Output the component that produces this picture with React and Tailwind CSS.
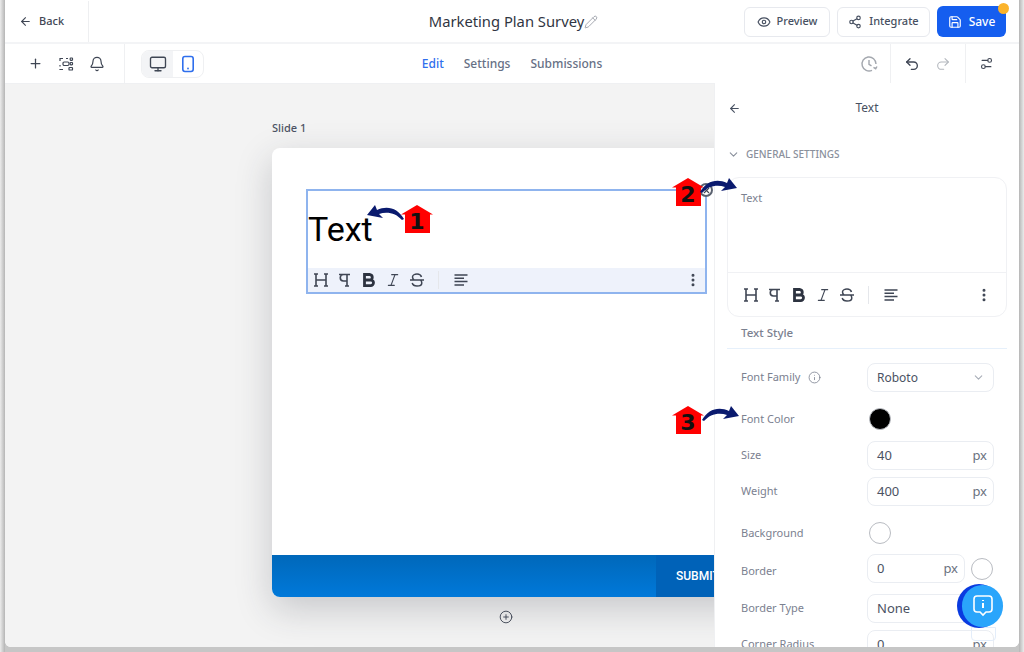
import React from "react";
import { ArrowLeft, Bell, ChevronDown, CirclePlus, EllipsisVertical, Eye, Info, Italic, Monitor, Pencil, Plus, Redo2, Save, Settings2, Share2, Undo2, X } from "lucide-react";

const HeadingIcon = () => (
    <svg width="16" height="16" viewBox="0 0 16 16" fill="none" stroke="currentColor" strokeWidth="1.6">
        <path d="M3 2v12M13 2v12M3 8h10M1 2h4M11 2h4M1 14h4M11 14h4" />
    </svg>
);

const ParagraphIcon = () => (
    <svg width="16" height="16" viewBox="0 0 16 16" fill="none" stroke="currentColor" strokeWidth="1.6">
        <path d="M2 2.5h11M10 2.5V14M8 14h4M10 9H6.5a3.2 3.2 0 0 1 0-6.5" />
    </svg>
);

const BoldIcon = () => (
    <svg width="16" height="16" viewBox="0 0 16 16" fill="none" stroke="currentColor" strokeWidth="2.8" className="text-[#2d3340]">
        <path d="M3.5 2.5h5.5a2.8 2.8 0 0 1 0 5.5H3.5h6.2a2.8 2.8 0 0 1 0 5.6H3.5Z" />
    </svg>
);

const StrikeIcon = () => (
    <svg width="16" height="16" viewBox="0 0 16 16" fill="none" stroke="currentColor" strokeWidth="1.5">
        <path d="M1 8h14M12.5 5c-.5-1.8-2.3-3-4.5-3S3.5 3.3 3.5 5c0 1.2.6 2.2 1.6 3M11.4 8c.9.7 1.4 1.7 1.4 2.9 0 1.8-2 3.1-4.8 3.1-2.500 0-4.300-1.200-4.800-3" />
    </svg>
);

const AlignIcon = () => (
    <svg width="16" height="16" viewBox="0 0 16 16" fill="none" stroke="currentColor" strokeWidth="1.5">
        <path d="M1.500 3h13M1.500 6.300h9.500M1.500 9.600h13M1.500 12.900h9.500" />
    </svg>
);

const ScanIcon = () => (
    <svg width="16" height="16" viewBox="0 0 16 16" fill="none" stroke="currentColor" strokeWidth="1.2">
        <path d="M2 5V2.500h3M8 2.500h2M2 9v1.500M2 13v.5h3" />
        <rect x="5" y="6" width="6" height="3.500" rx="1.200" />
        <rect x="12.200" y="2" width="2.300" height="2.300" rx=".5" />
        <rect x="12.200" y="6.500" width="2.300" height="2.300" rx=".5" />
        <rect x="11" y="11.500" width="3.500" height="2.500" rx=".6" />
    </svg>
);

const PhoneIcon = () => (
    <svg width="18" height="18" viewBox="0 0 18 18" fill="none" stroke="currentColor" strokeWidth="1.6">
        <rect x="3.800" y="1.500" width="10.400" height="15" rx="2.200" />
        <circle cx="9" cy="13.500" r=".9" fill="currentColor" stroke="none" />
    </svg>
);

const HistoryIcon = () => (
    <svg width="18" height="18" viewBox="0 0 18 18" fill="none" stroke="currentColor" strokeWidth="1.4" className="text-[#a3a7ae] mr-[12px]">
        <path d="M16 9A7 7 0 1 0 12 15.300M9 5v4.300l2.500 1.500M17 11.500l-1.300 2.200-2.200-1.300" />
    </svg>
);

const FormatBar = ({ className }) => (
    <div className={`flex items-center text-[#3f4654] ${className}`}>
        <div className="flex items-center gap-2">
            <HeadingIcon />
            <ParagraphIcon />
            <BoldIcon />
            <Italic size={16} strokeWidth={1.7} />
            <StrikeIcon />
        </div>
        <div className="w-px h-[18px] bg-[#e5e7eb] ml-[13px] mr-[14px]"></div>
        <AlignIcon />
        <EllipsisVertical size={16} strokeWidth={2.5} className="ml-auto" />
    </div>
);

const Marker = ({ n, className }) => (
    <div className={`absolute w-[32px] h-[28px] ${className}`}>
        <svg width="32" height="28" viewBox="0 0 32 28" className="absolute inset-0">
            <path d="M16 0L32 9.500H29V28H4V9.500H0Z" fill="#ff0000" />
        </svg>
        <span className="absolute inset-0 flex items-center justify-center pt-[5px] text-[22px] font-bold text-[#111] font-['DejaVu_Sans',sans-serif]">{n}</span>
    </div>
);

const CurveArrow = ({ className, flip }) => (
    <svg width="38" height="18" viewBox="0 0 38 18" className={`absolute ${flip ? "-scale-x-100" : ""} ${className}`} fill="#0a1a6e">
        <path d="M0 14C6 3 17 0 27 5L29 0L37 10L21 13L25 9C17 6 8 8 2 15Z" />
    </svg>
);

const Row = ({ label, children, className, info, labelClass = "" }) => (
    <div className={`flex items-center ${className}`}>
        <div className={`w-[126px] flex items-center gap-[8px] text-[11px] text-[#7b8190] ${labelClass}`}>
            {label}
            {info && <Info size={13} strokeWidth={1.5} />}
        </div>
        {children}
    </div>
);

const Input = ({ value, unit, className }) => (
    <div className={`h-[29px] border border-[#eaedf2] rounded-lg flex items-center justify-between pl-[9px] pr-[6px] text-[13px] text-[#4b5263] ${className}`}>
        <span>{value}</span>
        {unit && <span className="text-[#6b7280]">{unit}</span>}
    </div>
);

const Swatch = ({ className }) => (
    <div className={`w-[22px] h-[22px] rounded-full border border-[#b9bcc2] ${className}`}></div>
);

const App = () => {
    return (
        <div className="relative w-[1024px] h-[652px] overflow-hidden bg-[#c6c6c6] font-['Noto_Sans',sans-serif]">
            <div className="absolute inset-y-0 left-0 w-[5px] bg-gradient-to-r from-[#ececec] to-[#b5b5b5]"></div>
            <div className="absolute inset-y-0 right-0 w-[5px] bg-gradient-to-l from-[#ececec] to-[#b5b5b5]"></div>
            <div className="relative ml-[5px] mr-[5px] h-[647px] bg-white rounded-b-md overflow-hidden flex flex-col">
                <header className="h-[44px] shrink-0 pt-[1px] grid grid-cols-[1fr_auto_1fr] items-center border-b-2 border-[#f3f4f6]">
                    <div className="h-[41px] w-[84px] border-r border-[#eeeff1] flex items-center gap-[7px] pl-[14px] text-[11px] font-medium text-[#3f4654]">
                        <ArrowLeft size={13} />
                        Back
                    </div>
                    <div className="flex items-center pl-[3px] text-[14.75px] text-[#2f3542]">
                        Marketing Plan Survey
                        <Pencil size={14} strokeWidth={1.3} className="text-[#8a8f99]" />
                    </div>
                    <div className="flex justify-end items-center gap-[7px] pr-[13px]">
                        <button className="h-[30px] w-[86px] border border-[#e7e9ee] rounded-md flex items-center justify-center gap-[6px] text-[11px] font-medium text-[#475061]">
                            <Eye size={14} />
                            Preview
                        </button>
                        <button className="h-[30px] w-[93px] border border-[#e7e9ee] rounded-md flex items-center justify-center gap-[7px] text-[11px] font-medium text-[#475061]">
                            <Share2 size={14} />
                            Integrate
                        </button>
                        <button className="relative h-[31px] w-[69px] bg-[#155eef] rounded-md flex items-center justify-center gap-[7px] text-[12px] font-medium text-white">
                            <Save size={14} />
                            Save
                            <span className="absolute -top-[3px] -right-[3px] w-[11px] h-[11px] rounded-full bg-[#fbb32b]"></span>
                        </button>
                    </div>
                </header>

                <div className="h-[40px] shrink-0 grid grid-cols-[1fr_auto_1fr] items-center border-b border-[#eff0f2]">
                    <div className="flex items-center h-full">
                        <div className="flex items-center h-full w-[120px] border-r border-[#eff0f2] gap-[15px] pl-[23px] text-[#3f4654]">
                            <Plus size={15} />
                            <ScanIcon />
                            <Bell size={16} strokeWidth={1.8} />
                        </div>
                        <div className="ml-[16px] flex h-[28px] w-[63px] border border-[#eff0f2] rounded-lg overflow-hidden">
                            <div className="w-[31px] bg-[#f3f4f6] flex items-center justify-center text-[#3f4654]">
                                <Monitor size={18} strokeWidth={1.8} />
                            </div>
                            <div className="flex-1 flex items-center justify-center text-[#2f6fed]">
                                <PhoneIcon />
                            </div>
                        </div>
                    </div>
                    <nav className="flex items-center gap-[20px] text-[12px] font-medium text-[#667085]">
                        <span className="text-[#2f6fed]">Edit</span>
                        <span>Settings</span>
                        <span>Submissions</span>
                    </nav>
                    <div className="flex items-center justify-end h-full">
                        <HistoryIcon />
                        <div className="h-full w-[76px] border-x border-[#eff0f2] flex items-center gap-[15px] pl-[13px]">
                            <Undo2 size={16} strokeWidth={2} className="text-[#3f4654]" />
                            <Redo2 size={16} strokeWidth={1.6} className="text-[#b3b7bd]" />
                        </div>
                        <div className="w-[53px] flex pl-[13px] text-[#3f4654]">
                            <Settings2 size={15} strokeWidth={1.8} className="-scale-x-100" />
                        </div>
                    </div>
                </div>

                <div className="flex-1 min-h-0 flex bg-[#f3f3f3]">
                    <main className="relative flex-1 min-w-0 overflow-hidden pl-[267px] pt-[36px]">
                        <div className="text-[11px] font-medium text-[#4b5263] h-[28px]">Slide 1</div>
                        <div className="w-[560px] h-[449px] bg-white rounded-lg overflow-hidden shadow-[0_12px_36px_rgba(40,44,60,0.22)] flex flex-col">
                            <div className="flex-1 pt-[41px] pl-[34px]">
                                <div className="w-[401px] h-[105px] border-2 border-[#8fb4ee] flex flex-col">
                                    <div className="flex-1 pt-[16px] text-[34px] leading-[44px] text-black font-['Roboto',sans-serif]">Text</div>
                                    <FormatBar className="h-[24px] bg-[#eef2fb] pl-[5px] pr-[4px]" />
                                </div>
                            </div>
                            <div className="h-[42px] flex bg-gradient-to-b from-[#0068ba] to-[#0079da]">
                                <div className="ml-[384px] w-[176px] bg-[#0062b8] flex items-center pl-[20px] text-[12px] font-medium text-white font-['Roboto',sans-serif]">SUBMIT</div>
                            </div>
                        </div>
                        <div className="absolute left-[494px] top-[526px] text-[#3f4654]">
                            <CirclePlus size={14} strokeWidth={1.6} />
                        </div>
                    </main>

                    <aside className="w-[305px] shrink-0 -mt-[1px] pt-[1px] bg-white border-l border-[#eff0f2] overflow-hidden px-[12px]">
                        <div className="relative h-[48px] flex items-center justify-center text-[12px] text-[#475061]">
                            <ArrowLeft size={13} className="absolute left-[1px]" />
                            Text
                        </div>
                        <div className="h-[45px] flex items-center gap-[6px] text-[10px] font-medium text-[#8a909c]">
                            <ChevronDown size={13} />
                            GENERAL SETTINGS
                        </div>
                        <div className="h-[140px] border border-[#f0f1f4] rounded-xl flex flex-col">
                            <div className="h-[95px] border-b border-[#f0f1f4] pl-[13px] pt-[12px] text-[11px] text-[#7b8190]">Text</div>
                            <FormatBar className="flex-1 pl-[15px] pr-[14px]" />
                        </div>
                        <div className="h-[32px] pt-[1px] border-b border-[#e6f0fb] pl-[14px] flex items-center text-[11.5px] font-medium text-[#7b8190]">Text Style</div>
                        <div className="pl-[14px] pt-[14px] flex flex-col">
                            <Row label="Font Family" info className="h-[29px]">
                                <div className="w-[127px] h-[29px] border border-[#eaedf2] rounded-lg flex items-center justify-between pl-[9px] pr-[8px] text-[12px] text-[#4b5263]">
                                    Roboto
                                    <ChevronDown size={13} className="text-[#a8adb7]" />
                                </div>
                            </Row>
                            <Row label="Font Color" className="mt-[13px] h-[28px]">
                                <div className="ml-[2px] w-[22px] h-[22px] rounded-full bg-black border border-[#b9bcc2]"></div>
                            </Row>
                            <Row label="Size" className="mt-[8px]">
                                <Input value="40" unit="px" className="w-[127px]" />
                            </Row>
                            <Row label="Weight" className="mt-[7px]">
                                <Input value="400" unit="px" className="w-[127px]" />
                            </Row>
                            <Row label="Background" className="mt-[15px] h-[24px]">
                                <Swatch className="ml-[2px]" />
                            </Row>
                            <Row label="Border" labelClass="pt-[5px]" className="mt-[9px]">
                                <Input value="0" unit="px" className="w-[98px]" />
                                <Swatch className="ml-[6px]" />
                            </Row>
                            <Row label="Border Type" className="mt-[11px]">
                                <Input value="None" className="w-[127px]" />
                            </Row>
                            <Row label="Corner Radius" className="mt-[7px]">
                                <Input value="0" unit="px" className="w-[127px]" />
                            </Row>
                        </div>
                    </aside>
                </div>
            </div>

            {/* annotations sit on top of the page */}
            <div className="absolute left-[699px] top-[183px] w-[14px] h-[14px] rounded-full border-2 border-[#5b6270] bg-white flex items-center justify-center text-[#3f4654]">
                <X size={9} strokeWidth={3} />
            </div>
            <Marker n="1" className="left-[401px] top-[205px]" />
            <CurveArrow flip className="left-[366px] top-[205px]" />
            <Marker n="2" className="left-[672px] top-[178px]" />
            <CurveArrow className="left-[700px] top-[178px]" />
            <Marker n="3" className="left-[672px] top-[406px]" />
            <CurveArrow className="left-[702px] top-[406px]" />

            <div className="absolute left-[971px] top-[627px] w-[25px] h-[14px] border border-[#e3edfa] rounded-b flex items-center justify-center text-[9px] text-[#b8bcc4]"></div>
            <div className="absolute left-[957px] top-[584px] w-[44px] h-[44px] rounded-full bg-[#0a3be0]"></div>
            <div className="absolute left-[962px] top-[585px] w-[41px] h-[42px] rounded-full bg-[#2aa5fb] flex items-center justify-center text-white">
                <svg width="22" height="24" viewBox="0 0 22 24" fill="none" stroke="currentColor" strokeWidth="1.6">
                    <path d="M5 2h12a3 3 0 0 1 3 3v10a3 3 0 0 1-3 3h-3l-3 3-3-3H5a3 3 0 0 1-3-3V5a3 3 0 0 1 3-3Z" />
                    <path d="M11 9v5M11 6v1" strokeWidth="2" />
                </svg>
            </div>
        </div>
    );
};

export default App;
